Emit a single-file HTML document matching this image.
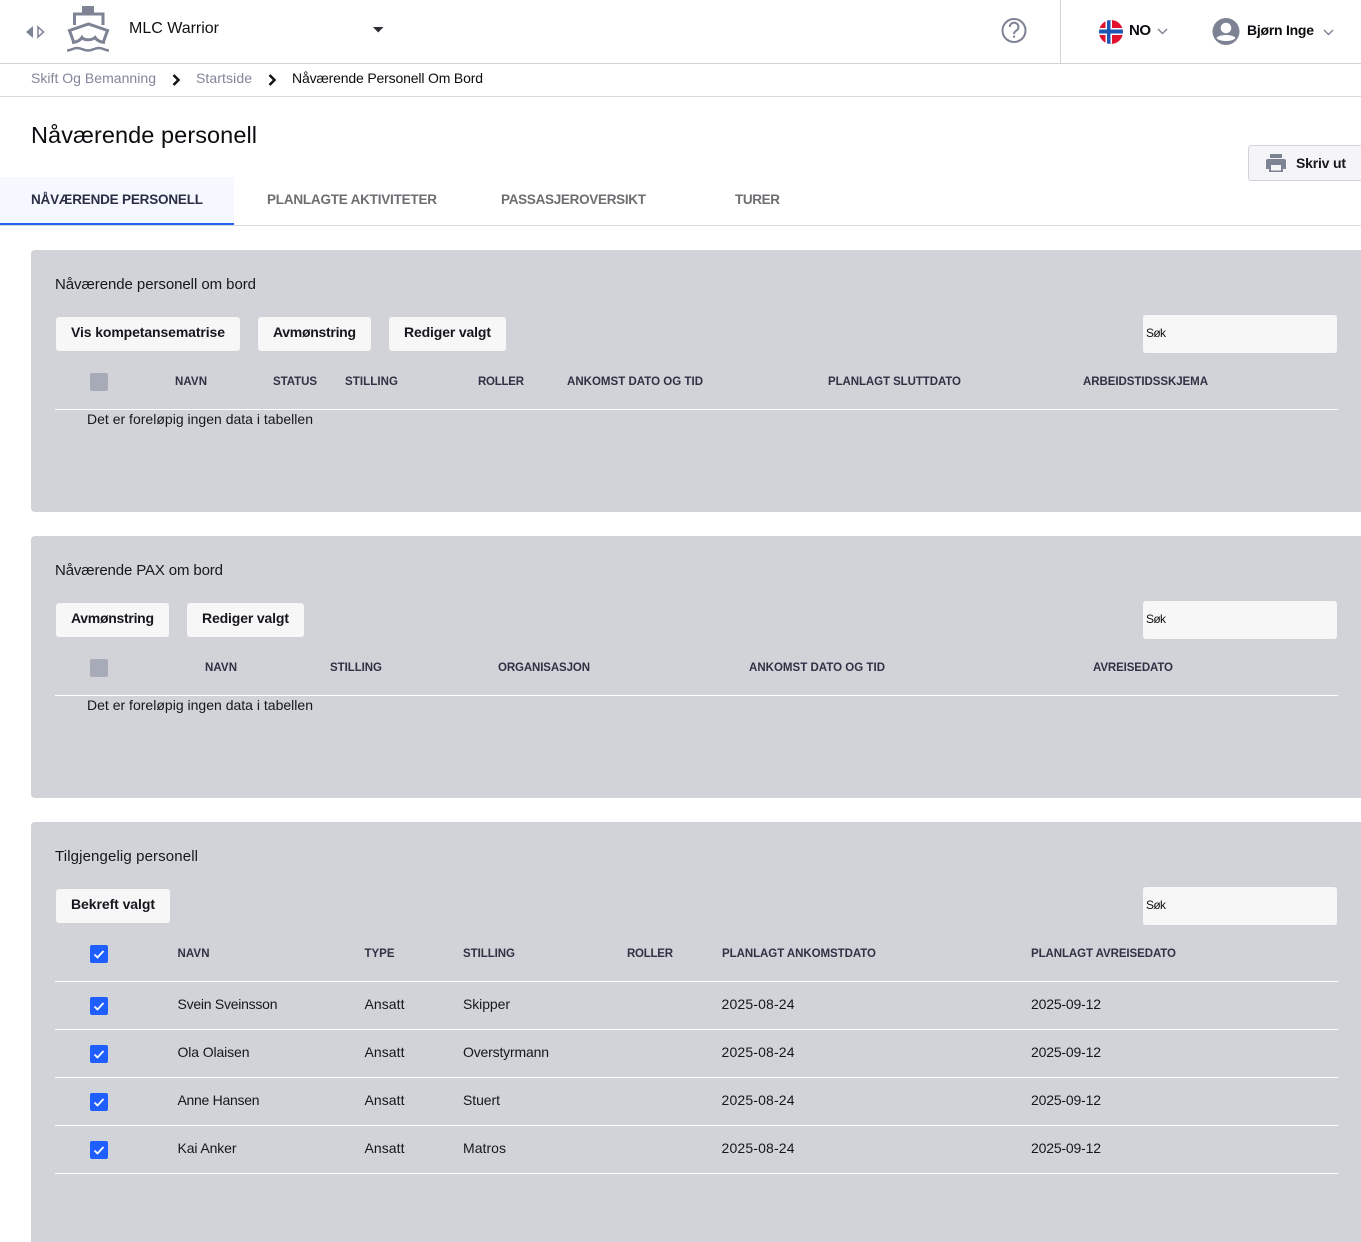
<!DOCTYPE html>
<html lang="no">
<head>
<meta charset="utf-8">
<title>Nåværende personell</title>
<style>
html,body{margin:0;padding:0;background:#fff;width:1361px;height:1242px;overflow:hidden}
svg{display:block}
text{font-family:"Liberation Sans",sans-serif;white-space:pre}
.b{font-size:14px;fill:#16171d}
.bb{font-size:14px;font-weight:700;fill:#16171d}
.h{font-size:11.500px;font-weight:700;fill:#2f3144}
.tab{font-size:13.500px;font-weight:700;fill:#6d6e72}
.bc{font-size:14px;fill:#82869a}
.s{font-size:12px;fill:#111}
</style>
</head>
<body>
<svg width="1361" height="1242" viewBox="0 0 1361 1242" xmlns="http://www.w3.org/2000/svg">
<rect width="1361" height="1242" fill="#fff"/>

<!-- top bar -->
<rect x="0" y="63" width="1361" height="1" fill="#d2d3d9"/>
<rect x="1060" y="0" width="1" height="63" fill="#d2d3d9"/>
<rect x="0" y="96" width="1361" height="1" fill="#d9dadf"/>
<path d="M33 26V38L26 32Z" fill="#7d8294"/>
<path d="M38 27V37L43.500 32Z" fill="#fff" stroke="#7d8294" stroke-width="1.500"/>
<g fill="none" stroke="#7d8294" stroke-width="3">
<path d="M74.500 25V14H103V25"/>
<path d="M74 43L69.500 30.500L88.500 24L107.500 30.500L103 43"/>
<path d="M72 42.500C76 42.500 80 40.500 82 37.500C84 40.500 92 40.500 95 37.500C97 40.500 101 42.500 105 42.500"/>
</g>
<path d="M67 50.500C71 50.500 73 48 77 48C81 48 84 50.500 88 50.500C92 50.500 95 48 99 48C103 48 105 50.500 109 50.500" fill="none" stroke="#7d8294" stroke-width="2.500"/>
<rect x="82" y="6" width="12" height="7" fill="#7d8294"/>
<text x="129" y="33" textLength="90" style="font-size:16px;fill:#111">MLC Warrior</text>
<path d="M373 27H383.500L378.200 32.500Z" fill="#2c2d33"/>

<circle cx="1014" cy="30.500" r="11.500" fill="none" stroke="#7d8294" stroke-width="2"/>
<path d="M1009.800 27A4.300 4.300 0 1 1 1016.300 30.700C1014.800 31.600 1014 32.400 1014 34" fill="none" stroke="#7d8294" stroke-width="2"/>
<rect x="1013" y="35.500" width="2" height="2.200" fill="#7d8294"/>

<clipPath id="fl"><circle cx="1111" cy="32" r="12"/></clipPath>
<g clip-path="url(#fl)">
<rect x="1099" y="20" width="24" height="24" fill="#e0122d"/>
<rect x="1105.500" y="20" width="6.500" height="24" fill="#fff"/>
<rect x="1099" y="28" width="24" height="7" fill="#fff"/>
<rect x="1107" y="20" width="3.500" height="24" fill="#1c56b4"/>
<rect x="1099" y="29.500" width="24" height="4" fill="#1c56b4"/>
</g>
<text x="1129" y="35" textLength="22" class="bb" style="font-size:15px;fill:#0c0c10">NO</text>
<path d="M1158 29L1162.500 33.500L1167 29" fill="none" stroke="#7d8294" stroke-width="1.400"/>

<circle cx="1226" cy="31.500" r="13.500" fill="#7d8294"/>
<circle cx="1226" cy="28" r="5.300" fill="#fff"/>
<path d="M1216.500 38C1219 34 1233 34 1235.500 38C1232 42 1220 42 1216.500 38Z" fill="#fff"/>
<text x="1247" y="35" textLength="67" class="bb" style="fill:#0c0c10">Bjørn Inge</text>
<path d="M1324 30L1328.500 34.500L1333 30" fill="none" stroke="#7d8294" stroke-width="1.400"/>

<!-- breadcrumb -->
<text x="31" y="83" textLength="125" class="bc">Skift Og Bemanning</text>
<path d="M173.500 75L178.500 80L173.500 85" fill="none" stroke="#111" stroke-width="2.500"/>
<text x="196" y="83" textLength="56" class="bc">Startside</text>
<path d="M269.500 75L274.500 80L269.500 85" fill="none" stroke="#111" stroke-width="2.500"/>
<text x="292" y="83" textLength="191" class="b" style="fill:#0c0c10">Nåværende Personell Om Bord</text>

<!-- title -->
<text x="31" y="143" textLength="226" style="font-size:23.500px;fill:#0c0c10">Nåværende personell</text>

<!-- print button -->
<rect x="1248.500" y="145.500" width="125" height="35" rx="3" fill="#f5f5f7" stroke="#d2d3d9"/>
<path d="M1270 154H1282V158H1270Z" fill="#7d8294"/>
<path d="M1268 159H1284Q1286 159 1286 161V169H1283V172H1269V169H1266V161Q1266 159 1268 159Z" fill="#7d8294"/>
<rect x="1271" y="165" width="10" height="5.500" fill="#f5f5f7"/>
<text x="1296" y="168" textLength="50" class="bb">Skriv ut</text>

<!-- tabs -->
<rect x="0" y="225" width="1361" height="1" fill="#d9dadf"/>
<rect x="0" y="177" width="234" height="46" fill="#f5f8ff"/>
<rect x="0" y="223" width="234" height="2" fill="#2563eb"/>
<text x="31" y="204" textLength="172" class="tab" style="fill:#2a2d45">NÅVÆRENDE PERSONELL</text>
<text x="267" y="204" textLength="170" class="tab">PLANLAGTE AKTIVITETER</text>
<text x="501" y="204" textLength="145" class="tab">PASSASJEROVERSIKT</text>
<text x="735" y="204" textLength="45" class="tab">TURER</text>

<!-- section 1 -->
<rect x="31" y="250" width="1340" height="262" rx="4" fill="#d2d3d9"/>
<text x="55" y="289" textLength="201" class="b" style="font-size:15px">Nåværende personell om bord</text>
<rect x="56" y="317" width="184" height="34" rx="3" fill="#f7f7f8"/>
<text x="71" y="337" textLength="154" class="bb">Vis kompetansematrise</text>
<rect x="258" y="317" width="113" height="34" rx="3" fill="#f7f7f8"/>
<text x="273" y="337" textLength="83" class="bb">Avmønstring</text>
<rect x="389" y="317" width="117" height="34" rx="3" fill="#f7f7f8"/>
<text x="404" y="337" textLength="87" class="bb">Rediger valgt</text>
<rect x="1143" y="315" width="194" height="38" rx="3" fill="#f7f7f8"/>
<text x="1146" y="337" textLength="20" class="s">Søk</text>
<rect x="90" y="373" width="18" height="18" rx="2" fill="#a7aab7"/>
<text x="175" y="385" textLength="32" class="h">NAVN</text>
<text x="273" y="385" textLength="44" class="h">STATUS</text>
<text x="345" y="385" textLength="53" class="h">STILLING</text>
<text x="478" y="385" textLength="46" class="h">ROLLER</text>
<text x="567" y="385" textLength="136" class="h">ANKOMST DATO OG TID</text>
<text x="828" y="385" textLength="133" class="h">PLANLAGT SLUTTDATO</text>
<text x="1083" y="385" textLength="125" class="h">ARBEIDSTIDSSKJEMA</text>
<rect x="55" y="409" width="1283" height="1" fill="#fff"/>
<text x="87" y="424" textLength="226" class="b">Det er foreløpig ingen data i tabellen</text>

<!-- section 2 -->
<rect x="31" y="536" width="1340" height="262" rx="4" fill="#d2d3d9"/>
<text x="55" y="575" textLength="168" class="b" style="font-size:15px">Nåværende PAX om bord</text>
<rect x="56" y="603" width="113" height="34" rx="3" fill="#f7f7f8"/>
<text x="71" y="623" textLength="83" class="bb">Avmønstring</text>
<rect x="187" y="603" width="117" height="34" rx="3" fill="#f7f7f8"/>
<text x="202" y="623" textLength="87" class="bb">Rediger valgt</text>
<rect x="1143" y="601" width="194" height="38" rx="3" fill="#f7f7f8"/>
<text x="1146" y="623" textLength="20" class="s">Søk</text>
<rect x="90" y="659" width="18" height="18" rx="2" fill="#a7aab7"/>
<text x="205" y="671" textLength="32" class="h">NAVN</text>
<text x="330" y="671" textLength="52" class="h">STILLING</text>
<text x="498" y="671" textLength="92" class="h">ORGANISASJON</text>
<text x="749" y="671" textLength="136" class="h">ANKOMST DATO OG TID</text>
<text x="1093" y="671" textLength="80" class="h">AVREISEDATO</text>
<rect x="55" y="695" width="1283" height="1" fill="#fff"/>
<text x="87" y="710" textLength="226" class="b">Det er foreløpig ingen data i tabellen</text>

<!-- section 3 -->
<rect x="31" y="822" width="1340" height="440" rx="4" fill="#d2d3d9"/>
<text x="55" y="861" textLength="143" class="b" style="font-size:15px">Tilgjengelig personell</text>
<rect x="56" y="889" width="114" height="34" rx="3" fill="#f7f7f8"/>
<text x="71" y="909" textLength="84" class="bb">Bekreft valgt</text>
<rect x="1143" y="887" width="194" height="38" rx="3" fill="#f7f7f8"/>
<text x="1146" y="909" textLength="20" class="s">Søk</text>

<defs>
<g id="c"><rect width="18" height="18" rx="2" fill="#1f5fff"/><path d="M4.500 9.500L7.500 12.500L13.500 6" fill="none" stroke="#fff" stroke-width="1.800"/></g>
</defs>
<use href="#c" x="90" y="945"/>
<text x="177.500" y="957" textLength="32" class="h">NAVN</text>
<text x="364.500" y="957" textLength="30" class="h">TYPE</text>
<text x="463" y="957" textLength="52" class="h">STILLING</text>
<text x="627" y="957" textLength="46" class="h">ROLLER</text>
<text x="722" y="957" textLength="154" class="h">PLANLAGT ANKOMSTDATO</text>
<text x="1031" y="957" textLength="145" class="h">PLANLAGT AVREISEDATO</text>
<rect x="55" y="981" width="1283" height="1" fill="#fff"/>

<use href="#c" x="90" y="997"/>
<text x="177.500" y="1009" textLength="100" class="b">Svein Sveinsson</text>
<text x="364.500" y="1009" textLength="40" class="b">Ansatt</text>
<text x="463" y="1009" textLength="47" class="b">Skipper</text>
<text x="721.500" y="1009" textLength="73" class="b">2025-08-24</text>
<text x="1031" y="1009" textLength="70" class="b">2025-09-12</text>
<rect x="55" y="1029" width="1283" height="1" fill="#fff"/>

<use href="#c" x="90" y="1045"/>
<text x="177.500" y="1057" textLength="72" class="b">Ola Olaisen</text>
<text x="364.500" y="1057" textLength="40" class="b">Ansatt</text>
<text x="463" y="1057" textLength="86" class="b">Overstyrmann</text>
<text x="721.500" y="1057" textLength="73" class="b">2025-08-24</text>
<text x="1031" y="1057" textLength="70" class="b">2025-09-12</text>
<rect x="55" y="1077" width="1283" height="1" fill="#fff"/>

<use href="#c" x="90" y="1093"/>
<text x="177.500" y="1105" textLength="82" class="b">Anne Hansen</text>
<text x="364.500" y="1105" textLength="40" class="b">Ansatt</text>
<text x="463" y="1105" textLength="37" class="b">Stuert</text>
<text x="721.500" y="1105" textLength="73" class="b">2025-08-24</text>
<text x="1031" y="1105" textLength="70" class="b">2025-09-12</text>
<rect x="55" y="1125" width="1283" height="1" fill="#fff"/>

<use href="#c" x="90" y="1141"/>
<text x="177.500" y="1153" textLength="59" class="b">Kai Anker</text>
<text x="364.500" y="1153" textLength="40" class="b">Ansatt</text>
<text x="463" y="1153" textLength="43" class="b">Matros</text>
<text x="721.500" y="1153" textLength="73" class="b">2025-08-24</text>
<text x="1031" y="1153" textLength="70" class="b">2025-09-12</text>
<rect x="55" y="1173" width="1283" height="1" fill="#fff"/>
</svg>
</body>
</html>
